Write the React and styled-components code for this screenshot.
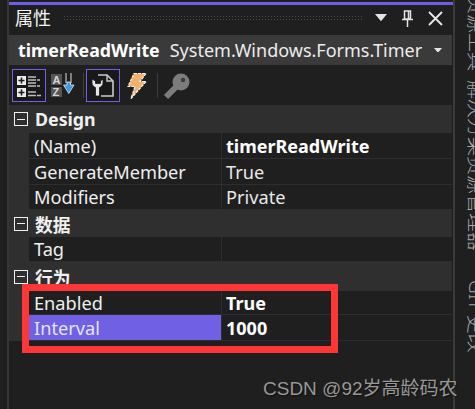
import React from "react";
import styled, { createGlobalStyle } from "styled-components";

const Global = createGlobalStyle`
  html, body { margin: 0; padding: 0; background: #1f1f1f; overflow: hidden; }
  * { box-sizing: border-box; }
`;
const FONT = `"Noto Sans", "Noto Sans CJK SC", sans-serif`;

const Page = styled.div`
  position: relative; width: 475px; height: 409px; display: flex; background: #1f1f1f;
  font-family: ${FONT}; color: #f2f2f2; overflow: hidden;
`;
const LeftEdge = styled.div`width: 9px; flex: none; border-right: 2px solid #363636;`;
const Panel = styled.div`width: 444px; flex: none; display: flex; flex-direction: column; padding-top: 2px;`;
const Accent = styled.div`height: 3px; background: #6c5fe0;`;
const TitleBar = styled.div`height: 30px; display: flex; align-items: center; padding: 0 10px 4px 6px; gap: 12px;`;
const Title = styled.div`font-size: 18px; line-height: 26px; color: #f4f4f4;`;
const Grip = styled.div`
  flex: 1; height: 7px;
  background-image: radial-gradient(#4a4a4a 0.7px, transparent 0.8px);
  background-size: 3px 3px;
`;
const TitleIcons = styled.div`display: flex; align-items: center; gap: 15px; color: #e6e6e6;`;
const ObjectBar = styled.div`
  height: 30px; background: #3a3a3a; display: flex; align-items: center; padding: 0 10px 0 9px;
  white-space: nowrap; margin-right: 1px; font-size: 18px;
`;
const ObjName = styled.span`font-weight: 700; font-size: 17.8px; margin-right: 10px; color: #fff;`;
const ObjType = styled.span`flex: 1; color: #ececec;`;
const Toolbar = styled.div`height: 40px; display: flex; align-items: center; padding: 1px 0 0 3px;`;
const ToolBtn = styled.div`
  width: 34px; height: 33px; display: flex; align-items: center; justify-content: center;
  border: 1px solid ${p => (p.$on ? "#6f61e8" : "transparent")};
  background: ${p => (p.$on ? "#191919" : "transparent")};
`;
const Sep = styled.div`width: 1px; height: 25px; background: #3c3c3c; margin: 0 2px 0 3px;`;
const Grid = styled.div`display: flex; flex-direction: column; margin-right: 1px; background: #2f2f2f; font-size: 18.2px;`;
const Group = styled.div`
  height: ${p => p.$h}px; display: flex; align-items: center; padding-left: 5px; gap: 7px;
  font-weight: 700; color: #f0f0f0; font-size: 17.8px;
`;
const Toggle = styled.div`
  width: 14px; height: 14px; border: 1px solid #f0f0f0; display: flex; align-items: center; justify-content: center;
  flex: none; &::after { content: ""; width: 8px; height: 1px; background: #f0f0f0; }
`;
const Row = styled.div`
  height: ${p => p.$h}px; margin-left: 20px; display: grid; grid-template-columns: 192px 1fr;
  background: #1f1f1f; border-bottom: 1px solid #2e2e2e;
`;
const Name = styled.div`
  padding-left: 5px; display: flex; align-items: center; white-space: nowrap;
  color: ${p => (p.$sel ? "#e6e4ff" : "#efefef")};
  background: ${p => (p.$sel ? "#6f60e4" : "transparent")};
`;
const Value = styled.div`
  padding-left: 4px; display: flex; align-items: center; border-left: 1px solid #2e2e2e; white-space: nowrap;
  font-weight: ${p => (p.$b ? 700 : 400)}; font-size: ${p => (p.$b ? 18 : 18.2)}px;
  color: ${p => (p.$b ? "#fff" : "#e8e8e8")};
`;
const Empty = styled.div`flex: 1; background: #1f1f1f;`;
const SideRail = styled.div`
  flex: 1; border-left: 2px solid #3a3a3a; padding-left: 11px; overflow: hidden;
`;
const SideTab = styled.div`
  writing-mode: vertical-rl; text-orientation: sideways; font-size: 19px; line-height: 19px; color: #a3a8a8;
  white-space: nowrap; margin-top: ${p => p.$mt}px; font-weight: 300;
`;
const Highlight = styled.div`
  position: absolute; left: 22px; top: 284px; width: 316px; height: 69px; border: 7px solid #fd3737; pointer-events: none;
`;
const Watermark = styled.div`
  position: absolute; left: 263px; top: 378px; font-size: 19px; line-height: 22px; color: #989898; white-space: nowrap;
  text-shadow: 1px 1px 1px #111;
  font-family: "Liberation Sans", "Noto Sans CJK SC", sans-serif;
`;

const CatIcon = () => (
  <svg width="28" height="26" viewBox="0 0 28 26">
    <rect x="2" y="3" width="9" height="9" fill="#ececec" />
    <rect x="2" y="15" width="9" height="9" fill="#ececec" />
    <path d="M3.500 7.500h6M6.500 4.500v6M3.500 19.500h6" stroke="#1a1a1a" strokeWidth="1.600" />
    <path d="M6.500 16.500v6" stroke="#1a1a1a" strokeWidth="1.600" />
    <path d="M13 4h9M13 7h12M13 10h9M13 13h12M13 19h8M13 22.500h13" stroke="#bdbdbd" strokeWidth="1.700" strokeDasharray="8 1" />
  </svg>
);
const SortIcon = () => (
  <svg width="26" height="26" viewBox="0 0 26 26">
    <rect x="1" y="1" width="11" height="11" fill="#555" />
    <text x="2.500" y="10.500" fontSize="11" fontWeight="700" fill="#d4d4d4" fontFamily="Liberation Sans">A</text>
    <rect x="1" y="14" width="11" height="10" fill="#555" />
    <text x="2.500" y="23" fontSize="11" fontWeight="700" fill="#d4d4d4" fontFamily="Liberation Sans">Z</text>
    <path d="M16 0v10" stroke="#e0e0e0" strokeWidth="1" />
    <path d="M21 0v10" stroke="#e0e0e0" strokeWidth="1" />
    <path d="M17 9h3.500v3H24l-5.200 8.500-5.300-8.500H17z" fill="#3f9be0" stroke="#e8e8e8" strokeWidth=".8" />
  </svg>
);
const PagesIcon = () => (
  <svg width="26" height="26" viewBox="0 0 26 26">
    <path d="M8 2h9l6 6v15H11" fill="none" stroke="#cacaca" strokeWidth="1.600" />
    <path d="M17 2v6h6" fill="none" stroke="#cacaca" strokeWidth="1.400" />
    <path d="M2 6v4c0 2 1.500 4 3.500 4.500V23h4v-8.500C11.500 14 13 12 13 10V6l-2.500 2v2.500h-5V8z" fill="#e6e6e6" stroke="#161616" strokeWidth=".8" />
  </svg>
);
const BoltIcon = () => (
  <svg width="24" height="28" viewBox="0 0 24 28">
    <path d="M9 1.500h12l-6 8h6L6 26.500l4-12H3z" fill="#f2b26e" stroke="#f5f5f5" strokeWidth="1.200" strokeDasharray="3 1" />
  </svg>
);
const KeyIcon = () => (
  <svg width="28" height="28" viewBox="0 0 28 28">
    <path d="M3 25l11-11" stroke="#7c7c7c" strokeWidth="6" />
    <circle cx="18" cy="10" r="8.500" fill="#7c7c7c" />
    <circle cx="20" cy="8" r="2.200" fill="#3c3c3c" />
  </svg>
);
const Caret = ({ s = 10 }) => (
  <svg width={s} height={s * 0.6} viewBox="0 0 10 6"><path d="M0 0h10L5 6z" fill="#e4e4e4" /></svg>
);
const Pin = () => (
  <svg width="11" height="17" viewBox="0 0 11 17">
    <path d="M2.500 1h6v8h-6zM6.500 1v8M0 9.500h11M5.500 10v7" fill="none" stroke="#e4e4e4" strokeWidth="1.500" />
  </svg>
);
const Close = () => (
  <svg width="15" height="15" viewBox="0 0 15 15"><path d="M1 1l13 13M14 1L1 14" stroke="#e8e8e8" strokeWidth="1.800" /></svg>
);

export default function App() {
  return (
    <Page>
      <Global />
      <LeftEdge />
      <Panel>
        <Accent />
        <TitleBar>
          <Title>属性</Title>
          <Grip />
          <TitleIcons><Caret s={12} /><Pin /><Close /></TitleIcons>
        </TitleBar>
        <ObjectBar>
          <ObjName>timerReadWrite</ObjName>
          <ObjType>System.Windows.Forms.Timer</ObjType>
          <Caret s={8} />
        </ObjectBar>
        <Toolbar>
          <ToolBtn $on><CatIcon /></ToolBtn>
          <ToolBtn><SortIcon /></ToolBtn>
          <Sep />
          <ToolBtn $on><PagesIcon /></ToolBtn>
          <ToolBtn><BoltIcon /></ToolBtn>
          <Sep />
          <ToolBtn><KeyIcon /></ToolBtn>
        </Toolbar>
        <Grid>
          <Group $h={28}><Toggle />Design</Group>
          <Row $h={26}><Name>(Name)</Name><Value $b>timerReadWrite</Value></Row>
          <Row $h={26}><Name>GenerateMember</Name><Value>True</Value></Row>
          <Row $h={25}><Name>Modifiers</Name><Value>Private</Value></Row>
          <Group $h={27}><Toggle />数据</Group>
          <Row $h={25}><Name>Tag</Name><Value /></Row>
          <Group $h={29}><Toggle />行为</Group>
          <Row $h={24}><Name>Enabled</Name><Value $b>True</Value></Row>
          <Row $h={26}><Name $sel>Interval</Name><Value $b>1000</Value></Row>
        </Grid>
        <Empty />
      </Panel>
      <SideRail>
        <SideTab $mt={-5}>资源工具</SideTab>
        <SideTab $mt={9}>解决方案资源管理器</SideTab>
        <SideTab $mt={29}>GIT 更改</SideTab>
      </SideRail>
      <Highlight />
      <Watermark>CSDN @92岁高龄码农</Watermark>
    </Page>
  );
}
